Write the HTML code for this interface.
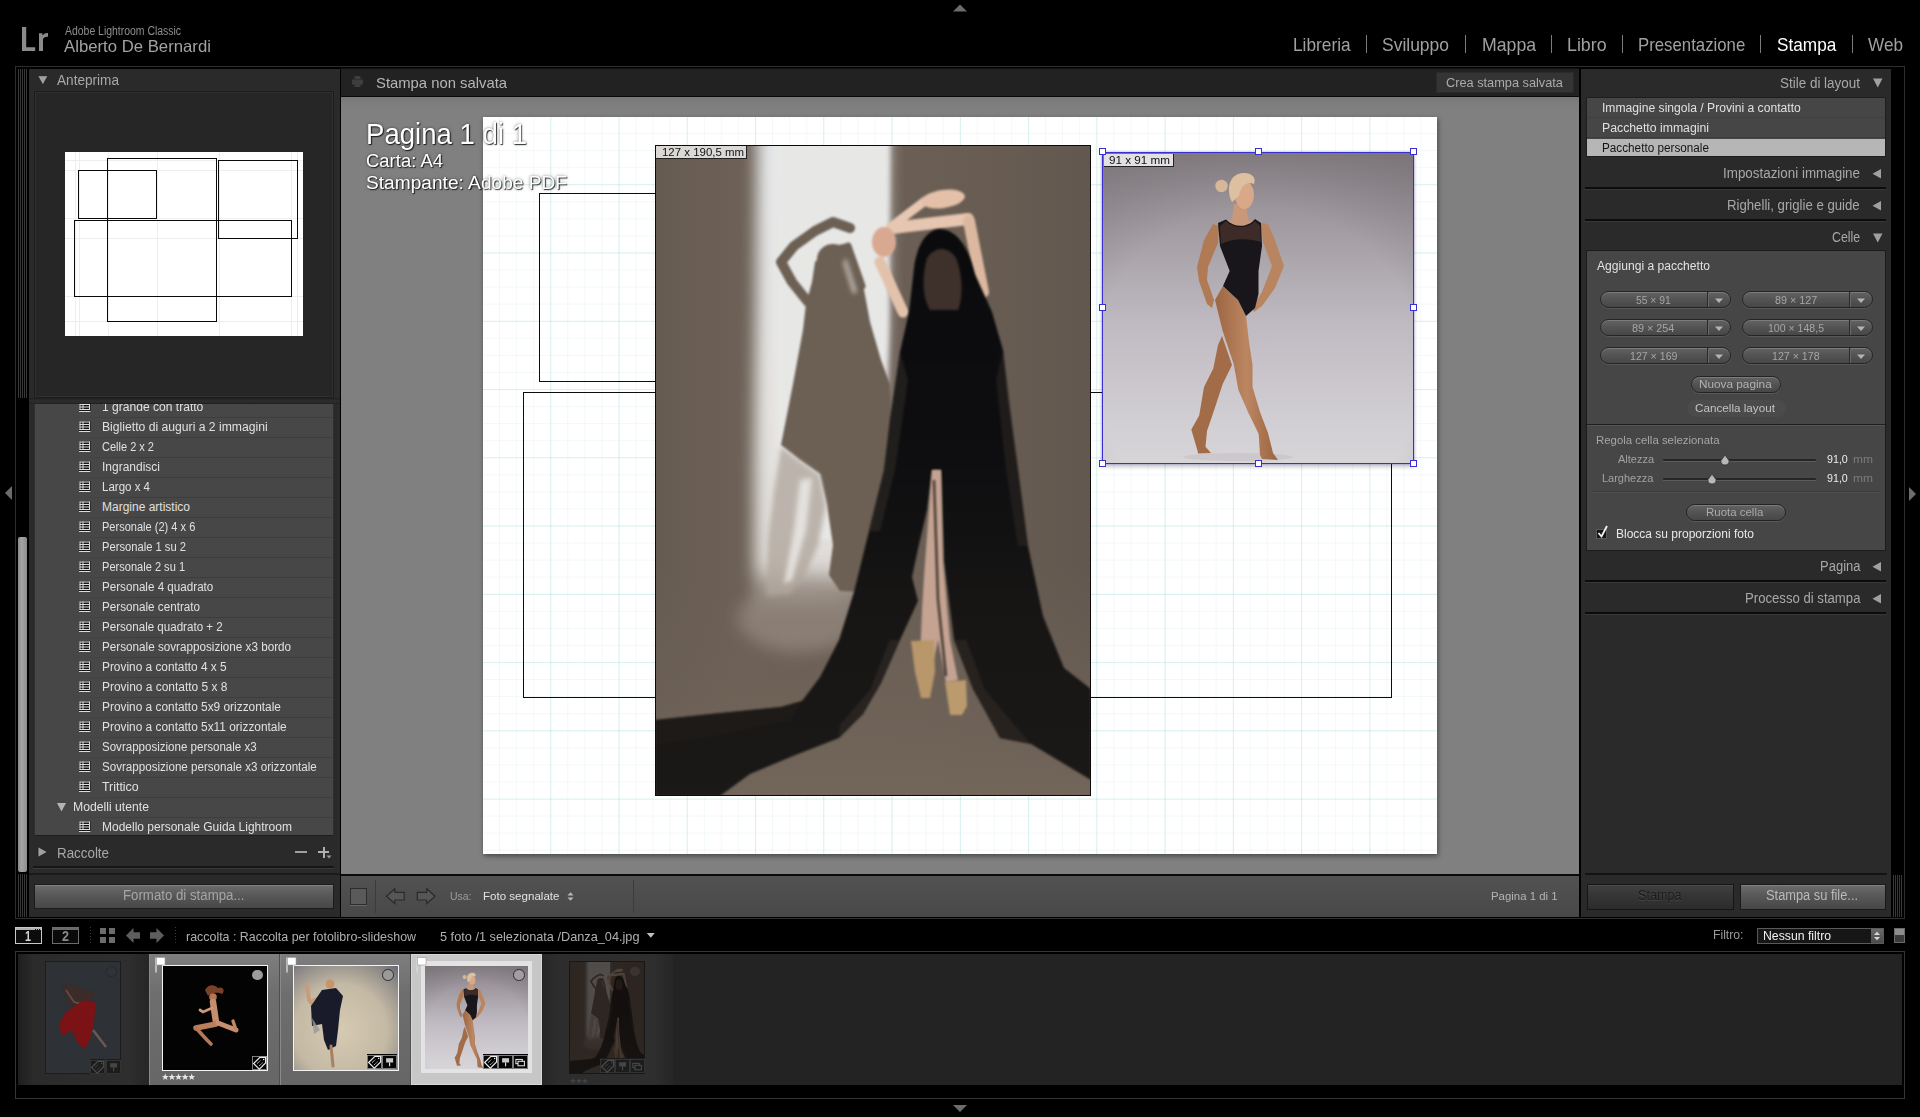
<!DOCTYPE html>
<html><head><meta charset="utf-8"><title>Lightroom Classic - Stampa</title>
<style>
*{box-sizing:border-box;margin:0;padding:0}
html,body{width:1920px;height:1117px;overflow:hidden;background:#000}
body{font-family:"Liberation Sans",sans-serif;position:relative}
.a{position:absolute;display:block}
.t{position:absolute;display:block;white-space:nowrap;line-height:1;transform-origin:0 50%}
</style></head>
<body>
<!-- TOP -->
<svg class="a" style="left:20px;top:25px" width="32" height="30" viewBox="20 25 32 30"><path d="M22 27h4.2v20.3h9v3.7H22z" fill="#8a8a8a"/><path d="M39 33.2h3.3l.3 2.3c1.2-1.8 2.9-2.6 5.4-2.5v3.8c-2.700-.3-4.6.6-5 2.600V51h-4z" fill="#8a8a8a"/></svg>
<span class="t" style="left:65.0px;top:25.1px;font-size:12px;color:#8e8e8e;transform:scaleX(0.870);">Adobe Lightroom Classic</span>
<span class="t" style="left:64.0px;top:37.6px;font-size:16.5px;color:#a2a2a2;transform:scaleX(1.014);">Alberto De Bernardi</span>
<span class="t" style="left:1293.0px;top:35.4px;font-size:19px;color:#a0a0a0;transform:scaleX(0.909);">Libreria</span>
<span class="t" style="left:1382.4px;top:35.4px;font-size:19px;color:#a0a0a0;transform:scaleX(0.919);">Sviluppo</span>
<span class="t" style="left:1481.6px;top:35.4px;font-size:19px;color:#a0a0a0;transform:scaleX(0.931);">Mappa</span>
<span class="t" style="left:1567.2px;top:35.4px;font-size:19px;color:#a0a0a0;transform:scaleX(0.937);">Libro</span>
<span class="t" style="left:1638.3px;top:35.4px;font-size:19px;color:#a0a0a0;transform:scaleX(0.883);">Presentazione</span>
<span class="t" style="left:1777.0px;top:35.4px;font-size:19px;color:#ffffff;transform:scaleX(0.906);">Stampa</span>
<span class="t" style="left:1868.0px;top:35.4px;font-size:19px;color:#a0a0a0;transform:scaleX(0.904);">Web</span>
<div class="a" style="left:1365.5px;top:35px;width:1px;height:18px;background:#7a7a7a"></div>
<div class="a" style="left:1464.5px;top:35px;width:1px;height:18px;background:#7a7a7a"></div>
<div class="a" style="left:1550.5px;top:35px;width:1px;height:18px;background:#7a7a7a"></div>
<div class="a" style="left:1621.5px;top:35px;width:1px;height:18px;background:#7a7a7a"></div>
<div class="a" style="left:1759.5px;top:35px;width:1px;height:18px;background:#7a7a7a"></div>
<div class="a" style="left:1851.5px;top:35px;width:1px;height:18px;background:#7a7a7a"></div>
<svg class="a" style="left:950px;top:2px" width="20" height="12"><path d="M3 9.500L10 2.500L17 9.500z" fill="#6c6c6c"/></svg>
<svg class="a" style="left:950px;top:1102px" width="20" height="12"><path d="M3 3L10 10L17 3z" fill="#6c6c6c"/></svg>
<svg class="a" style="left:2px;top:484px" width="12" height="18"><path d="M10 2L3 9L10 16z" fill="#6c6c6c"/></svg>
<svg class="a" style="left:1906px;top:485px" width="12" height="18"><path d="M3 2L10 9L3 16z" fill="#6c6c6c"/></svg>
<div class="a" style="left:15px;top:66px;width:1890px;height:853px;border:1px solid #2e2e2e;border-bottom-color:#2e2e2e"></div>
<div class="a" style="left:18px;top:69px;width:9px;height:329px;background:repeating-linear-gradient(90deg,#383838 0 1px,#000 1px 2px)"></div>
<div class="a" style="left:18px;top:874px;width:9px;height:43px;background:repeating-linear-gradient(90deg,#383838 0 1px,#000 1px 2px)"></div>
<div class="a" style="left:18px;top:537px;width:9px;height:335px;background:linear-gradient(90deg,#8a8a8a,#a4a4a4 40%,#8c8c8c);border-radius:2px"></div>
<div class="a" style="left:1893px;top:875px;width:9px;height:42px;background:repeating-linear-gradient(90deg,#383838 0 1px,#000 1px 2px)"></div>
<!-- LEFT -->
<div class="a" style="left:29px;top:69px;width:311px;height:848px;background:#2a2a2a"></div>
<svg class="a" style="left:36px;top:73px" width="14" height="14"><path d="M1.700 2.700h10.300L6.850 12z" fill="#a0a0a0" stroke="#151515" stroke-width=".7"/></svg>
<span class="t" style="left:57.0px;top:73.1px;font-size:14px;color:#a8a8a8;transform:scaleX(0.972);">Anteprima</span>
<div class="a" style="left:34px;top:91px;width:300px;height:307px;background:#262626;border:1px solid #1c1c1c;box-shadow:inset 0 0 0 1px #303030"></div>
<svg class="a" style="left:65px;top:152px" width="238" height="184" viewBox="65 152 238 184"><rect x="65" y="152" width="238" height="184" fill="#fff"/><path d="M75.500 152v184M79.500 152v184M108.500 152v184M157.500 152v184M219.500 152v184M291.500 152v184M297.500 152v184M65 160.500h238M65 170.500h238M65 218.500h238M65 238.500h238M65 296.500h238M65 321.500h238" stroke="#eeeeee" stroke-width="1"/><g fill="none" stroke="#0a0a0a" stroke-width="1"><rect x="107.500" y="158.500" width="109" height="163"/><rect x="78.500" y="170.500" width="78" height="48"/><rect x="218.500" y="160.500" width="79" height="78"/><rect x="74.500" y="220.500" width="217" height="76"/></g></svg>
<div class="a" style="left:34px;top:404px;width:300px;height:432px;background:#474747;border-left:1px solid #2e2e2e;border-right:1px solid #2e2e2e;border-bottom:1px solid #1e1e1e"></div>
<div class="a" style="left:60px;top:417px;width:273px;height:1px;background:linear-gradient(90deg,rgba(62,62,62,0),#3d3d3d 30%)"></div>
<div class="a" style="left:60px;top:437px;width:273px;height:1px;background:linear-gradient(90deg,rgba(62,62,62,0),#3d3d3d 30%)"></div>
<div class="a" style="left:60px;top:457px;width:273px;height:1px;background:linear-gradient(90deg,rgba(62,62,62,0),#3d3d3d 30%)"></div>
<div class="a" style="left:60px;top:477px;width:273px;height:1px;background:linear-gradient(90deg,rgba(62,62,62,0),#3d3d3d 30%)"></div>
<div class="a" style="left:60px;top:497px;width:273px;height:1px;background:linear-gradient(90deg,rgba(62,62,62,0),#3d3d3d 30%)"></div>
<div class="a" style="left:60px;top:517px;width:273px;height:1px;background:linear-gradient(90deg,rgba(62,62,62,0),#3d3d3d 30%)"></div>
<div class="a" style="left:60px;top:537px;width:273px;height:1px;background:linear-gradient(90deg,rgba(62,62,62,0),#3d3d3d 30%)"></div>
<div class="a" style="left:60px;top:557px;width:273px;height:1px;background:linear-gradient(90deg,rgba(62,62,62,0),#3d3d3d 30%)"></div>
<div class="a" style="left:60px;top:577px;width:273px;height:1px;background:linear-gradient(90deg,rgba(62,62,62,0),#3d3d3d 30%)"></div>
<div class="a" style="left:60px;top:597px;width:273px;height:1px;background:linear-gradient(90deg,rgba(62,62,62,0),#3d3d3d 30%)"></div>
<div class="a" style="left:60px;top:617px;width:273px;height:1px;background:linear-gradient(90deg,rgba(62,62,62,0),#3d3d3d 30%)"></div>
<div class="a" style="left:60px;top:637px;width:273px;height:1px;background:linear-gradient(90deg,rgba(62,62,62,0),#3d3d3d 30%)"></div>
<div class="a" style="left:60px;top:657px;width:273px;height:1px;background:linear-gradient(90deg,rgba(62,62,62,0),#3d3d3d 30%)"></div>
<div class="a" style="left:60px;top:677px;width:273px;height:1px;background:linear-gradient(90deg,rgba(62,62,62,0),#3d3d3d 30%)"></div>
<div class="a" style="left:60px;top:697px;width:273px;height:1px;background:linear-gradient(90deg,rgba(62,62,62,0),#3d3d3d 30%)"></div>
<div class="a" style="left:60px;top:717px;width:273px;height:1px;background:linear-gradient(90deg,rgba(62,62,62,0),#3d3d3d 30%)"></div>
<div class="a" style="left:60px;top:737px;width:273px;height:1px;background:linear-gradient(90deg,rgba(62,62,62,0),#3d3d3d 30%)"></div>
<div class="a" style="left:60px;top:757px;width:273px;height:1px;background:linear-gradient(90deg,rgba(62,62,62,0),#3d3d3d 30%)"></div>
<div class="a" style="left:60px;top:777px;width:273px;height:1px;background:linear-gradient(90deg,rgba(62,62,62,0),#3d3d3d 30%)"></div>
<div class="a" style="left:60px;top:797px;width:273px;height:1px;background:linear-gradient(90deg,rgba(62,62,62,0),#3d3d3d 30%)"></div>
<div class="a" style="left:60px;top:817px;width:273px;height:1px;background:linear-gradient(90deg,rgba(62,62,62,0),#3d3d3d 30%)"></div>
<svg class="a" style="left:78.5px;top:401.25px" width="12" height="12" viewBox="0 0 12 12"><rect x="0" y="0" width="11.500" height="11.500" fill="#141414"/><path d="M.5 1h10.500M.5 3.500h10.500M.5 6h10.500M.5 8.500h10.500M1 .5v8.500M10.500 .5v8.500M4 .5v8.500" stroke="#dcdcdc" stroke-width="1" fill="none"/><path d="M0 10.600h11.500" stroke="#e6e6e6" stroke-width="1.100"/></svg>
<span class="t" style="left:102.0px;top:401.0px;font-size:12px;color:#e0e0e0;transform:scaleX(1.006);">1 grande con tratto</span>
<svg class="a" style="left:78.5px;top:421.25px" width="12" height="12" viewBox="0 0 12 12"><rect x="0" y="0" width="11.500" height="11.500" fill="#141414"/><path d="M.5 1h10.500M.5 3.500h10.500M.5 6h10.500M.5 8.500h10.500M1 .5v8.500M10.500 .5v8.500M4 .5v8.500" stroke="#dcdcdc" stroke-width="1" fill="none"/><path d="M0 10.600h11.500" stroke="#e6e6e6" stroke-width="1.100"/></svg>
<span class="t" style="left:102.0px;top:421.0px;font-size:12px;color:#e0e0e0;transform:scaleX(1.014);">Biglietto di auguri a 2 immagini</span>
<svg class="a" style="left:78.5px;top:441.25px" width="12" height="12" viewBox="0 0 12 12"><rect x="0" y="0" width="11.500" height="11.500" fill="#141414"/><path d="M.5 1h10.500M.5 3.500h10.500M.5 6h10.500M.5 8.500h10.500M1 .5v8.500M10.500 .5v8.500M4 .5v8.500" stroke="#dcdcdc" stroke-width="1" fill="none"/><path d="M0 10.600h11.500" stroke="#e6e6e6" stroke-width="1.100"/></svg>
<span class="t" style="left:102.0px;top:441.0px;font-size:12px;color:#e0e0e0;transform:scaleX(0.917);">Celle 2 x 2</span>
<svg class="a" style="left:78.5px;top:461.25px" width="12" height="12" viewBox="0 0 12 12"><rect x="0" y="0" width="11.500" height="11.500" fill="#141414"/><path d="M.5 1h10.500M.5 3.500h10.500M.5 6h10.500M.5 8.500h10.500M1 .5v8.500M10.500 .5v8.500M4 .5v8.500" stroke="#dcdcdc" stroke-width="1" fill="none"/><path d="M0 10.600h11.500" stroke="#e6e6e6" stroke-width="1.100"/></svg>
<span class="t" style="left:102.0px;top:461.0px;font-size:12px;color:#e0e0e0;transform:scaleX(0.999);">Ingrandisci</span>
<svg class="a" style="left:78.5px;top:481.25px" width="12" height="12" viewBox="0 0 12 12"><rect x="0" y="0" width="11.500" height="11.500" fill="#141414"/><path d="M.5 1h10.500M.5 3.500h10.500M.5 6h10.500M.5 8.500h10.500M1 .5v8.500M10.500 .5v8.500M4 .5v8.500" stroke="#dcdcdc" stroke-width="1" fill="none"/><path d="M0 10.600h11.500" stroke="#e6e6e6" stroke-width="1.100"/></svg>
<span class="t" style="left:102.0px;top:481.0px;font-size:12px;color:#e0e0e0;transform:scaleX(0.959);">Largo x 4</span>
<svg class="a" style="left:78.5px;top:501.25px" width="12" height="12" viewBox="0 0 12 12"><rect x="0" y="0" width="11.500" height="11.500" fill="#141414"/><path d="M.5 1h10.500M.5 3.500h10.500M.5 6h10.500M.5 8.500h10.500M1 .5v8.500M10.500 .5v8.500M4 .5v8.500" stroke="#dcdcdc" stroke-width="1" fill="none"/><path d="M0 10.600h11.500" stroke="#e6e6e6" stroke-width="1.100"/></svg>
<span class="t" style="left:102.0px;top:501.0px;font-size:12px;color:#e0e0e0;transform:scaleX(1.000);">Margine artistico</span>
<svg class="a" style="left:78.5px;top:521.25px" width="12" height="12" viewBox="0 0 12 12"><rect x="0" y="0" width="11.500" height="11.500" fill="#141414"/><path d="M.5 1h10.500M.5 3.500h10.500M.5 6h10.500M.5 8.500h10.500M1 .5v8.500M10.500 .5v8.500M4 .5v8.500" stroke="#dcdcdc" stroke-width="1" fill="none"/><path d="M0 10.600h11.500" stroke="#e6e6e6" stroke-width="1.100"/></svg>
<span class="t" style="left:102.0px;top:521.0px;font-size:12px;color:#e0e0e0;transform:scaleX(0.920);">Personale (2) 4 x 6</span>
<svg class="a" style="left:78.5px;top:541.25px" width="12" height="12" viewBox="0 0 12 12"><rect x="0" y="0" width="11.500" height="11.500" fill="#141414"/><path d="M.5 1h10.500M.5 3.500h10.500M.5 6h10.500M.5 8.500h10.500M1 .5v8.500M10.500 .5v8.500M4 .5v8.500" stroke="#dcdcdc" stroke-width="1" fill="none"/><path d="M0 10.600h11.500" stroke="#e6e6e6" stroke-width="1.100"/></svg>
<span class="t" style="left:102.0px;top:541.0px;font-size:12px;color:#e0e0e0;transform:scaleX(0.933);">Personale 1 su 2</span>
<svg class="a" style="left:78.5px;top:561.25px" width="12" height="12" viewBox="0 0 12 12"><rect x="0" y="0" width="11.500" height="11.500" fill="#141414"/><path d="M.5 1h10.500M.5 3.500h10.500M.5 6h10.500M.5 8.500h10.500M1 .5v8.500M10.500 .5v8.500M4 .5v8.500" stroke="#dcdcdc" stroke-width="1" fill="none"/><path d="M0 10.600h11.500" stroke="#e6e6e6" stroke-width="1.100"/></svg>
<span class="t" style="left:102.0px;top:561.0px;font-size:12px;color:#e0e0e0;transform:scaleX(0.922);">Personale 2 su 1</span>
<svg class="a" style="left:78.5px;top:581.25px" width="12" height="12" viewBox="0 0 12 12"><rect x="0" y="0" width="11.500" height="11.500" fill="#141414"/><path d="M.5 1h10.500M.5 3.500h10.500M.5 6h10.500M.5 8.500h10.500M1 .5v8.500M10.500 .5v8.500M4 .5v8.500" stroke="#dcdcdc" stroke-width="1" fill="none"/><path d="M0 10.600h11.500" stroke="#e6e6e6" stroke-width="1.100"/></svg>
<span class="t" style="left:102.0px;top:581.0px;font-size:12px;color:#e0e0e0;transform:scaleX(0.970);">Personale 4 quadrato</span>
<svg class="a" style="left:78.5px;top:601.25px" width="12" height="12" viewBox="0 0 12 12"><rect x="0" y="0" width="11.500" height="11.500" fill="#141414"/><path d="M.5 1h10.500M.5 3.500h10.500M.5 6h10.500M.5 8.500h10.500M1 .5v8.500M10.500 .5v8.500M4 .5v8.500" stroke="#dcdcdc" stroke-width="1" fill="none"/><path d="M0 10.600h11.500" stroke="#e6e6e6" stroke-width="1.100"/></svg>
<span class="t" style="left:102.0px;top:601.0px;font-size:12px;color:#e0e0e0;transform:scaleX(0.973);">Personale centrato</span>
<svg class="a" style="left:78.5px;top:621.25px" width="12" height="12" viewBox="0 0 12 12"><rect x="0" y="0" width="11.500" height="11.500" fill="#141414"/><path d="M.5 1h10.500M.5 3.500h10.500M.5 6h10.500M.5 8.500h10.500M1 .5v8.500M10.500 .5v8.500M4 .5v8.500" stroke="#dcdcdc" stroke-width="1" fill="none"/><path d="M0 10.600h11.500" stroke="#e6e6e6" stroke-width="1.100"/></svg>
<span class="t" style="left:102.0px;top:621.0px;font-size:12px;color:#e0e0e0;transform:scaleX(0.965);">Personale quadrato + 2</span>
<svg class="a" style="left:78.5px;top:641.25px" width="12" height="12" viewBox="0 0 12 12"><rect x="0" y="0" width="11.500" height="11.500" fill="#141414"/><path d="M.5 1h10.500M.5 3.500h10.500M.5 6h10.500M.5 8.500h10.500M1 .5v8.500M10.500 .5v8.500M4 .5v8.500" stroke="#dcdcdc" stroke-width="1" fill="none"/><path d="M0 10.600h11.500" stroke="#e6e6e6" stroke-width="1.100"/></svg>
<span class="t" style="left:102.0px;top:641.0px;font-size:12px;color:#e0e0e0;transform:scaleX(0.974);">Personale sovrapposizione x3 bordo</span>
<svg class="a" style="left:78.5px;top:661.25px" width="12" height="12" viewBox="0 0 12 12"><rect x="0" y="0" width="11.500" height="11.500" fill="#141414"/><path d="M.5 1h10.500M.5 3.500h10.500M.5 6h10.500M.5 8.500h10.500M1 .5v8.500M10.500 .5v8.500M4 .5v8.500" stroke="#dcdcdc" stroke-width="1" fill="none"/><path d="M0 10.600h11.500" stroke="#e6e6e6" stroke-width="1.100"/></svg>
<span class="t" style="left:102.0px;top:661.0px;font-size:12px;color:#e0e0e0;transform:scaleX(0.989);">Provino a contatto 4 x 5</span>
<svg class="a" style="left:78.5px;top:681.25px" width="12" height="12" viewBox="0 0 12 12"><rect x="0" y="0" width="11.500" height="11.500" fill="#141414"/><path d="M.5 1h10.500M.5 3.500h10.500M.5 6h10.500M.5 8.500h10.500M1 .5v8.500M10.500 .5v8.500M4 .5v8.500" stroke="#dcdcdc" stroke-width="1" fill="none"/><path d="M0 10.600h11.500" stroke="#e6e6e6" stroke-width="1.100"/></svg>
<span class="t" style="left:102.0px;top:681.0px;font-size:12px;color:#e0e0e0;transform:scaleX(0.994);">Provino a contatto 5 x 8</span>
<svg class="a" style="left:78.5px;top:701.25px" width="12" height="12" viewBox="0 0 12 12"><rect x="0" y="0" width="11.500" height="11.500" fill="#141414"/><path d="M.5 1h10.500M.5 3.500h10.500M.5 6h10.500M.5 8.500h10.500M1 .5v8.500M10.500 .5v8.500M4 .5v8.500" stroke="#dcdcdc" stroke-width="1" fill="none"/><path d="M0 10.600h11.500" stroke="#e6e6e6" stroke-width="1.100"/></svg>
<span class="t" style="left:102.0px;top:701.0px;font-size:12px;color:#e0e0e0;transform:scaleX(0.990);">Provino a contatto 5x9 orizzontale</span>
<svg class="a" style="left:78.5px;top:721.25px" width="12" height="12" viewBox="0 0 12 12"><rect x="0" y="0" width="11.500" height="11.500" fill="#141414"/><path d="M.5 1h10.500M.5 3.500h10.500M.5 6h10.500M.5 8.500h10.500M1 .5v8.500M10.500 .5v8.500M4 .5v8.500" stroke="#dcdcdc" stroke-width="1" fill="none"/><path d="M0 10.600h11.500" stroke="#e6e6e6" stroke-width="1.100"/></svg>
<span class="t" style="left:102.0px;top:721.0px;font-size:12px;color:#e0e0e0;transform:scaleX(0.990);">Provino a contatto 5x11 orizzontale</span>
<svg class="a" style="left:78.5px;top:741.25px" width="12" height="12" viewBox="0 0 12 12"><rect x="0" y="0" width="11.500" height="11.500" fill="#141414"/><path d="M.5 1h10.500M.5 3.500h10.500M.5 6h10.500M.5 8.500h10.500M1 .5v8.500M10.500 .5v8.500M4 .5v8.500" stroke="#dcdcdc" stroke-width="1" fill="none"/><path d="M0 10.600h11.500" stroke="#e6e6e6" stroke-width="1.100"/></svg>
<span class="t" style="left:102.0px;top:741.0px;font-size:12px;color:#e0e0e0;transform:scaleX(0.962);">Sovrapposizione personale x3</span>
<svg class="a" style="left:78.5px;top:761.25px" width="12" height="12" viewBox="0 0 12 12"><rect x="0" y="0" width="11.500" height="11.500" fill="#141414"/><path d="M.5 1h10.500M.5 3.500h10.500M.5 6h10.500M.5 8.500h10.500M1 .5v8.500M10.500 .5v8.500M4 .5v8.500" stroke="#dcdcdc" stroke-width="1" fill="none"/><path d="M0 10.600h11.500" stroke="#e6e6e6" stroke-width="1.100"/></svg>
<span class="t" style="left:102.0px;top:761.0px;font-size:12px;color:#e0e0e0;transform:scaleX(0.967);">Sovrapposizione personale x3 orizzontale</span>
<svg class="a" style="left:78.5px;top:781.25px" width="12" height="12" viewBox="0 0 12 12"><rect x="0" y="0" width="11.500" height="11.500" fill="#141414"/><path d="M.5 1h10.500M.5 3.500h10.500M.5 6h10.500M.5 8.500h10.500M1 .5v8.500M10.500 .5v8.500M4 .5v8.500" stroke="#dcdcdc" stroke-width="1" fill="none"/><path d="M0 10.600h11.500" stroke="#e6e6e6" stroke-width="1.100"/></svg>
<span class="t" style="left:102.0px;top:781.0px;font-size:12px;color:#e0e0e0;transform:scaleX(1.032);">Trittico</span>
<svg class="a" style="left:78.5px;top:821.25px" width="12" height="12" viewBox="0 0 12 12"><rect x="0" y="0" width="11.500" height="11.500" fill="#141414"/><path d="M.5 1h10.500M.5 3.500h10.500M.5 6h10.500M.5 8.500h10.500M1 .5v8.500M10.500 .5v8.500M4 .5v8.500" stroke="#dcdcdc" stroke-width="1" fill="none"/><path d="M0 10.600h11.500" stroke="#e6e6e6" stroke-width="1.100"/></svg>
<span class="t" style="left:102.0px;top:821.0px;font-size:12px;color:#e0e0e0;transform:scaleX(0.999);">Modello personale Guida Lightroom</span>
<svg class="a" style="left:55px;top:801px" width="13" height="12"><path d="M2 2h9L6.500 10.500z" fill="#b4b4b4"/></svg>
<span class="t" style="left:73.0px;top:801.0px;font-size:12px;color:#e0e0e0;transform:scaleX(1.017);">Modelli utente</span>
<div class="a" style="left:29px;top:398px;width:311px;height:6px;background:linear-gradient(#1e1e1e,#2c2c2c 40%,#2a2a2a 80%,#1a1a1a)"></div>
<svg class="a" style="left:36px;top:845px" width="14" height="14"><path d="M2 1.800v10.400L11.500 7z" fill="#a0a0a0" stroke="#151515" stroke-width=".7"/></svg>
<span class="t" style="left:57.0px;top:845.5px;font-size:14px;color:#a8a8a8;transform:scaleX(0.955);">Raccolte</span>
<div class="a" style="left:295px;top:851px;width:12px;height:2px;background:#a0a0a0"></div>
<div class="a" style="left:318px;top:851px;width:11px;height:2px;background:#b0b0b0"></div>
<div class="a" style="left:322.5px;top:846.5px;width:2px;height:11px;background:#b0b0b0"></div>
<svg class="a" style="left:326px;top:855px" width="7" height="5"><path d="M.5 .5h5L3 3.500z" fill="#9a9a9a"/></svg>
<div class="a" style="left:33px;top:866px;width:301px;height:2px;background:#161616"></div>
<div class="a" style="left:33px;top:868px;width:301px;height:1px;background:#3a3a3a"></div>
<div class="a" style="left:29px;top:873px;width:311px;height:2px;background:#1a1a1a"></div>
<div class="a" style="left:34px;top:884px;width:300px;height:25px;background:linear-gradient(#6c6c6c,#585858 45%,#474747);border:1px solid #1c1c1c;box-shadow:inset 0 1px 0 #808080"></div>
<span class="t" style="left:123.0px;top:887.9px;font-size:14px;color:#a6a6a6;transform:scaleX(0.946);">Formato di stampa...</span>
<!-- CENTER -->
<div class="a" style="left:341px;top:68px;width:1238px;height:29px;background:#222;border-bottom:1px solid #080808;border-top:1px solid #101010"></div>
<svg class="a" style="left:350.500px;top:75px" width="13" height="13"><path d="M3.500 1h6v3h-6zM1 4.500h11v5H1zM3.500 8h6v4h-6z" fill="#3e3e3e"/></svg>
<span class="t" style="left:375.5px;top:75.1px;font-size:15px;color:#b6b6b6;transform:scaleX(0.988);">Stampa non salvata</span>
<div class="a" style="left:1436px;top:72px;width:138px;height:21px;background:#343434;border:1px solid #2a2a2a"></div>
<span class="t" style="left:1446.0px;top:76.4px;font-size:13px;color:#ababab;transform:scaleX(0.981);">Crea stampa salvata</span>
<div class="a" style="left:341px;top:97px;width:1238px;height:777px;background:linear-gradient(#787878,#808080 10px,#808080)"></div>
<div class="a" style="left:483px;top:117px;width:954px;height:737px;background-color:#fff;background-image:linear-gradient(90deg,rgba(130,215,208,.26) 1px,transparent 1px),linear-gradient(rgba(130,215,208,.26) 1px,transparent 1px),linear-gradient(90deg,rgba(160,205,212,.13) 1px,transparent 1px),linear-gradient(rgba(160,205,212,.13) 1px,transparent 1px);background-size:68.27px 68.27px,68.27px 68.27px,17.0675px 17.0675px,17.0675px 17.0675px;background-position:-1px -1px;box-shadow:1px 2px 5px rgba(0,0,0,.45)"></div>
<div class="a" style="left:539px;top:193px;width:320px;height:189px;border:1px solid #0c0c0c"></div>
<div class="a" style="left:523px;top:392px;width:869px;height:306px;border:1px solid #0c0c0c"></div>
<svg class="a" style="left:655px;top:145px" width="436" height="651" viewBox="655 145 436 651"><defs><linearGradient id="abg" x1="0" y1="0" x2="1" y2="0"><stop offset="0" stop-color="#665b51"/><stop offset=".18" stop-color="#6d6157"/><stop offset=".6" stop-color="#6b5f55"/><stop offset="1" stop-color="#63584f"/></linearGradient><linearGradient id="afl" x1="0" y1="0" x2="0" y2="1"><stop offset="0" stop-color="#6c6056" stop-opacity="0"/><stop offset="1" stop-color="#72665b"/></linearGradient><linearGradient id="alb" x1="0" y1="0" x2="0" y2="1"><stop offset="0" stop-color="#e6e8ea"/><stop offset=".6" stop-color="#e6e4e1"/><stop offset=".9" stop-color="#e0dcd8"/><stop offset="1" stop-color="#d0c8c0" stop-opacity="0"/></linearGradient><linearGradient id="avl" x1="0" y1="0" x2="0" y2="1"><stop offset="0" stop-color="#0b0b0d"/><stop offset=".4" stop-color="#0e0e10"/><stop offset=".7" stop-color="#181615"/><stop offset="1" stop-color="#1b1917"/></linearGradient><filter id="ab8" color-interpolation-filters="sRGB" x="-20%" y="-20%" width="140%" height="140%"><feGaussianBlur stdDeviation="8"/></filter><filter id="ab3" color-interpolation-filters="sRGB" x="-20%" y="-20%" width="140%" height="140%"><feGaussianBlur stdDeviation="2.500"/></filter><filter id="ab1" color-interpolation-filters="sRGB" x="-20%" y="-20%" width="140%" height="140%"><feGaussianBlur stdDeviation="0.800"/></filter><clipPath id="acl"><rect x="655" y="145" width="436" height="651"/></clipPath></defs><g clip-path="url(#acl)"><rect x="655" y="145" width="436" height="651" fill="url(#abg)"/><rect x="655" y="560" width="436" height="236" fill="url(#afl)"/><g filter="url(#ab8)"><path d="M757 120H888L886 330L882 420L878 480L870 560L860 612L754 612L754 470L756 300z" fill="url(#alb)"/></g><g filter="url(#ab3)"><path d="M776 120H890L889 330L886 420L882 480L876 540L776 540z" fill="#e7e7e6"/></g><ellipse cx="800" cy="618" rx="62" ry="34" fill="#a4988e" opacity=".55" filter="url(#ab8)"/><g filter="url(#ab1)" fill="#6c5f53"><path d="M829 247L848 243L857 262L864 290L870 322L881 360L890 384L894 445L893 500L882 552L862 592L840 591L829 575L833 545L827 505L820 474L800 460L781 445L793 384L803 330L806 304L812 282L815 262z"/><path d="M808 302L792 282L781 262L794 246L815 231L833 222L850 228" fill="none" stroke="#6c5f53" stroke-width="10" stroke-linecap="round" stroke-linejoin="round"/><path d="M848 246L862 286" fill="none" stroke="#6c5f53" stroke-width="7" stroke-linecap="round"/><ellipse cx="833" cy="259" rx="16" ry="15"/></g><g filter="url(#ab3)"><path d="M781 447L800 461L820 475L826 505L818 545L804 578L790 594L766 596L768 540L774 490z" fill="#b1a79d" opacity=".8"/><path d="M800 480L812 478L806 530L792 580L784 584L794 530z" fill="#ebe9e6" opacity=".85"/><path d="M846 258L857 292L853 294L843 262z" fill="#d6d2cc" opacity=".8"/></g><g filter="url(#ab1)" stroke-linecap="round" fill="none"><path d="M903 312L880 262" stroke="#e3c2ac" stroke-width="11"/><path d="M892 228L968 219" stroke="#e6c6b0" stroke-width="12"/><path d="M969 221L983 292" stroke="#dcb8a0" stroke-width="12"/><path d="M892 226L925 201" stroke="#e6c7b2" stroke-width="9"/><ellipse cx="943" cy="199" rx="22" ry="9" fill="#e4c0a8" stroke="none" transform="rotate(-8 943 199)"/><ellipse cx="884" cy="242" rx="12" ry="15" fill="#d9a890" stroke="none"/></g><g filter="url(#ab1)"><path d="M939 229C925 231 917 246 914 268L909 312L900 352L890 420L884 470L869 531L854 592L839 640L820 677L802 701L781 707L711 714L655 720V796H720L750 774L793 756L839 738L863 714L881 683L900 640L918 601L912 577L918 549L927 510L932 470L941 470L944 561L954 640L973 689L1000 738L1031 744L1061 762L1091 780V689L1064 668L1043 616L1028 546L1018 470L1008 400L1003 350L992 312L975 274C968 244 955 229 939 229z" fill="url(#avl)"/><path d="M927 258C922 276 922 298 930 310H958C964 296 962 272 956 258C948 246 935 246 927 258z" fill="#3e302b"/><path d="M900 352L884 470L869 531L880 531L895 470L908 380z" fill="#2a2622" opacity=".7"/><path d="M1003 350L1018 470L1028 546L1018 546L1006 470L996 380z" fill="#26221f" opacity=".7"/><path d="M655 720L711 714L781 707L802 701L790 720L720 735L655 745z" fill="#1e1b19" opacity=".8"/><path d="M839 738L863 714L881 683L900 640L890 640L870 690L840 725z" fill="#2c2723" opacity=".8"/><path d="M954 640L973 689L1000 738L1031 744L1010 720L985 690L966 640z" fill="#2a2521" opacity=".8"/></g><g filter="url(#ab1)"><path d="M932 470L941 470L943 561L950 640L958 680L946 682L938 640L934 660L920 660L922 610L924 577L926 549L929 510z" fill="#c4a392"/><path d="M934 480L938 600L946 676" stroke="#2a201c" stroke-width="2.500" fill="none" opacity=".8"/><path d="M911 641L934 640L935 672L930 698L921 698L915 672z" fill="#b8976a"/><path d="M945 682L966 680L967 706L962 715L950 715z" fill="#bb9a6e"/></g></g><rect x="655.500" y="145.500" width="435" height="650" fill="none" stroke="#0a0a0a" stroke-width="1"/></svg>
<div class="a" style="left:656px;top:146px;width:91px;height:13px;background:#dcd8d6;border-right:1px solid #222;border-bottom:1px solid #222"></div>
<span class="t" style="left:661.5px;top:147.2px;font-size:11px;color:#111;transform:scaleX(1.040);">127 x 190,5 mm</span>
<svg class="a" style="left:1102px;top:152px" width="312" height="312" viewBox="1102 152 312 312"><defs><linearGradient id="cbg" x1="0" y1="0" x2="0" y2="1"><stop offset="0" stop-color="#8a8388"/><stop offset=".25" stop-color="#a39da3"/><stop offset=".55" stop-color="#bfbac1"/><stop offset=".85" stop-color="#d1ced3"/><stop offset="1" stop-color="#d8d5d9"/></linearGradient><radialGradient id="cvg" cx=".5" cy=".7" r=".95"><stop offset=".55" stop-color="#000" stop-opacity="0"/><stop offset="1" stop-color="#3a3036" stop-opacity=".22"/></radialGradient><filter id="cb1" color-interpolation-filters="sRGB"><feGaussianBlur stdDeviation="0.700"/></filter></defs><rect x="1102" y="152" width="312" height="312" fill="url(#cbg)"/><rect x="1102" y="152" width="312" height="312" fill="url(#cvg)"/><ellipse cx="1238" cy="457" rx="55" ry="4" fill="#b8b2b8" opacity=".35" filter="url(#cb1)"/><g filter="url(#cb1)"><g transform="translate(0 0) scale(1)"><defs><linearGradient id="skn" x1="0" y1="0" x2="1" y2="0"><stop offset="0" stop-color="#9c6644"/><stop offset=".5" stop-color="#bb8660"/><stop offset="1" stop-color="#9a6442"/></linearGradient></defs><path d="M1222 336L1232 365L1222.700 384L1215 407.600L1207 431L1205.500 446.700L1211 453L1198 453.500L1197.600 451L1191.300 429.500L1199.200 415.400L1204 387L1213.300 368.400L1218 345z" fill="#a26c49"/><path d="M1223 286L1238 300L1246 316L1249 342L1252.500 365L1252.500 387L1260 412L1268 433L1273 453L1278 460L1262 459L1260 455L1258.700 434L1248 412L1238.400 390L1233.700 364L1222.700 331L1215 300z" fill="url(#skn)"/><path d="M1213 224L1219 226L1218 243L1208 267L1207 280L1214 300L1212 308L1207 304L1199 281L1197 267L1204 240z" fill="#b07a54"/><path d="M1261 223L1268 224L1275 240L1284 266L1275 288L1262 306L1254 312L1252 308L1262 292L1272 266L1263 242z" fill="#b98460"/><path d="M1234 204L1246 204L1248 220L1256 222L1240 232L1224 222L1232 220z" fill="#c99878"/><path d="M1218 223L1226 219.500C1234 228 1248 228 1255 219L1261 223L1262 246L1258.500 271L1258.500 294L1255 308L1246 316L1238 300L1223 286L1229.700 271L1220 246z" fill="#18161a"/><path d="M1220 226L1226 221C1234 229 1248 229 1255 221L1260 226L1261 242C1248 238 1232 238 1221 244z" fill="#4a332c" opacity=".75"/><ellipse cx="1244.500" cy="195" rx="9.500" ry="14" fill="#d8a888"/><path d="M1232 202C1226 190 1229 176 1240 173.500C1250 171.500 1257 177 1254 184C1248 181 1241 184 1239 196z" fill="#dcc0a0"/><circle cx="1221.500" cy="186" r="6.200" fill="#d6b898"/></g></g></svg>
<div class="a" style="left:1104px;top:153.5px;width:70px;height:13px;background:#e2e0e2;border-right:1px solid #222;border-bottom:1px solid #222"></div>
<span class="t" style="left:1108.5px;top:154.7px;font-size:11px;color:#111;transform:scaleX(1.061);">91 x 91 mm</span>
<div class="a" style="left:1102px;top:152px;width:312px;height:312px;border:1px solid #3a2fd0;box-shadow:0 0 2px rgba(70,60,220,.5),0 3px 4px rgba(0,0,0,.22)"></div>
<div class="a" style="left:1099px;top:148.2px;width:7px;height:7px;background:#fff;border:1px solid #3a2fd0"></div>
<div class="a" style="left:1099px;top:303.7px;width:7px;height:7px;background:#fff;border:1px solid #3a2fd0"></div>
<div class="a" style="left:1099px;top:459.5px;width:7px;height:7px;background:#fff;border:1px solid #3a2fd0"></div>
<div class="a" style="left:1254.5px;top:148.2px;width:7px;height:7px;background:#fff;border:1px solid #3a2fd0"></div>
<div class="a" style="left:1254.5px;top:459.5px;width:7px;height:7px;background:#fff;border:1px solid #3a2fd0"></div>
<div class="a" style="left:1410px;top:148.2px;width:7px;height:7px;background:#fff;border:1px solid #3a2fd0"></div>
<div class="a" style="left:1410px;top:303.7px;width:7px;height:7px;background:#fff;border:1px solid #3a2fd0"></div>
<div class="a" style="left:1410px;top:459.5px;width:7px;height:7px;background:#fff;border:1px solid #3a2fd0"></div>
<span class="t" style="left:366.0px;top:118.5px;font-size:29.5px;color:#fff;transform:scaleX(0.935);text-shadow:1px 1px 1px rgba(0,0,0,.75),0 0 3px rgba(0,0,0,.55);">Pagina 1 di 1</span>
<span class="t" style="left:366.0px;top:152.3px;font-size:18px;color:#fff;transform:scaleX(1.026);text-shadow:1px 1px 1px rgba(0,0,0,.75),0 0 3px rgba(0,0,0,.55);">Carta: A4</span>
<span class="t" style="left:366.0px;top:174.4px;font-size:18px;color:#fff;transform:scaleX(1.063);text-shadow:1px 1px 1px rgba(0,0,0,.75),0 0 3px rgba(0,0,0,.55);">Stampante: Adobe PDF</span>
<div class="a" style="left:341px;top:874px;width:1238px;height:2px;background:#0a0a0a"></div>
<div class="a" style="left:341px;top:876px;width:1238px;height:41px;background:linear-gradient(#525252,#484848)"></div>
<div class="a" style="left:350px;top:888px;width:17px;height:17px;background:#5a5a5a;border:1px solid #2c2c2c;box-shadow:0 1px 0 #666"></div>
<div class="a" style="left:375px;top:880px;width:1px;height:33px;background:#3c3c3c"></div>
<div class="a" style="left:633px;top:880px;width:1px;height:33px;background:#3c3c3c"></div>
<svg class="a" style="left:384px;top:886px" width="54" height="21" viewBox="384 886 54 21"><g fill="#565656" stroke="#2a2a2a" stroke-width="1.200" stroke-linejoin="miter"><path d="M386.500 896.200l8.300-7.500v3.700h9.400v7.600h-9.400v3.700z"/><path d="M435 896.200l-8.300-7.500v3.700h-9.400v7.600h9.400v3.700z"/></g></svg>
<span class="t" style="left:449.5px;top:891.0px;font-size:11.5px;color:#9c9c9c;transform:scaleX(0.909);">Usa:</span>
<span class="t" style="left:483.2px;top:891.0px;font-size:11.5px;color:#e2e2e2;transform:scaleX(1.005);">Foto segnalate</span>
<svg class="a" style="left:566px;top:890px" width="9" height="13"><path d="M1.500 5.400L4.500 2.200L7.500 5.400zM1.500 7.600L4.500 10.800L7.500 7.600z" fill="#b8b8b8"/></svg>
<span class="t" style="left:1491.0px;top:891.0px;font-size:11.5px;color:#b4b4b4;transform:scaleX(0.991);">Pagina 1 di 1</span>
<!-- RIGHT -->
<div class="a" style="left:1581px;top:69px;width:310px;height:848px;background:#2a2a2a"></div>
<span class="t" style="left:1780.0px;top:76.3px;font-size:14px;color:#a8a8a8;transform:scaleX(0.961);">Stile di layout</span>
<svg class="a" style="left:1872px;top:77px" width="12" height="12"><path d="M1 1.500h9.500L5.750 10.500z" fill="#a0a0a0"/></svg>
<div class="a" style="left:1586px;top:97px;width:300px;height:60px;background:#464646;border:1px solid #1e1e1e"></div>
<div class="a" style="left:1587px;top:117px;width:298px;height:1px;background:#404040"></div>
<div class="a" style="left:1587px;top:137px;width:298px;height:1px;background:#3c3c3c"></div>
<div class="a" style="left:1587px;top:139px;width:298px;height:17px;background:#b6b6b6"></div>
<span class="t" style="left:1602.0px;top:102.0px;font-size:12px;color:#e0e0e0;transform:scaleX(1.010);">Immagine singola / Provini a contatto</span>
<span class="t" style="left:1602.0px;top:122.0px;font-size:12px;color:#e0e0e0;transform:scaleX(1.022);">Pacchetto immagini</span>
<span class="t" style="left:1602.0px;top:142.0px;font-size:12px;color:#141414;transform:scaleX(0.978);">Pacchetto personale</span>
<span class="t" style="left:1723.0px;top:166.3px;font-size:14px;color:#a8a8a8;transform:scaleX(0.957);">Impostazioni immagine</span>
<svg class="a" style="left:1871px;top:168px" width="12" height="12"><path d="M10 1v9.500L1.500 5.750z" fill="#a0a0a0"/></svg>
<div class="a" style="left:1585px;top:187px;width:301px;height:2px;background:#0c0c0c"></div><div class="a" style="left:1585px;top:189px;width:301px;height:1px;background:#383838"></div>
<span class="t" style="left:1727.3px;top:198.3px;font-size:14px;color:#a8a8a8;transform:scaleX(0.942);">Righelli, griglie e guide</span>
<svg class="a" style="left:1871px;top:200px" width="12" height="12"><path d="M10 1v9.500L1.500 5.750z" fill="#a0a0a0"/></svg>
<div class="a" style="left:1585px;top:219px;width:301px;height:2px;background:#0c0c0c"></div><div class="a" style="left:1585px;top:221px;width:301px;height:1px;background:#383838"></div>
<span class="t" style="left:1831.8px;top:230.3px;font-size:14px;color:#a8a8a8;transform:scaleX(0.884);">Celle</span>
<svg class="a" style="left:1872px;top:232px" width="12" height="12"><path d="M1 1.500h9.500L5.750 10.500z" fill="#a0a0a0"/></svg>
<div class="a" style="left:1586px;top:250px;width:300px;height:301px;background:#464646;border:1px solid #1c1c1c"></div>
<span class="t" style="left:1597.0px;top:259.9px;font-size:12.5px;color:#e2e2e2;transform:scaleX(0.968);">Aggiungi a pacchetto</span>
<div class="a" style="left:1599.5px;top:291px;width:131px;height:17px;border-radius:8.5px;background:linear-gradient(#636363,#535353 50%,#474747);border:1px solid #242424;box-shadow:0 1px 0 rgba(255,255,255,.10),inset 0 1px 0 rgba(255,255,255,.16)"></div><div class="a" style="left:1707px;top:292px;width:1px;height:15px;background:#2a2a2a"></div><div class="a" style="left:1708px;top:292px;width:1px;height:15px;background:#686868"></div><svg class="a" style="left:1713.5px;top:296.5px" width="10" height="7"><path d="M1 1.500h8L5 6z" fill="#b4b4b4"/></svg><span class="t" style="left:1636.1px;top:294.6px;font-size:11.5px;color:#a6a6a6;transform:scaleX(0.899);">55 × 91</span>
<div class="a" style="left:1741.5px;top:291px;width:131px;height:17px;border-radius:8.5px;background:linear-gradient(#636363,#535353 50%,#474747);border:1px solid #242424;box-shadow:0 1px 0 rgba(255,255,255,.10),inset 0 1px 0 rgba(255,255,255,.16)"></div><div class="a" style="left:1849px;top:292px;width:1px;height:15px;background:#2a2a2a"></div><div class="a" style="left:1850px;top:292px;width:1px;height:15px;background:#686868"></div><svg class="a" style="left:1855.5px;top:296.5px" width="10" height="7"><path d="M1 1.500h8L5 6z" fill="#b4b4b4"/></svg><span class="t" style="left:1774.8px;top:294.6px;font-size:11.5px;color:#a6a6a6;transform:scaleX(0.938);">89 × 127</span>
<div class="a" style="left:1599.5px;top:319px;width:131px;height:17px;border-radius:8.5px;background:linear-gradient(#636363,#535353 50%,#474747);border:1px solid #242424;box-shadow:0 1px 0 rgba(255,255,255,.10),inset 0 1px 0 rgba(255,255,255,.16)"></div><div class="a" style="left:1707px;top:320px;width:1px;height:15px;background:#2a2a2a"></div><div class="a" style="left:1708px;top:320px;width:1px;height:15px;background:#686868"></div><svg class="a" style="left:1713.5px;top:324.5px" width="10" height="7"><path d="M1 1.500h8L5 6z" fill="#b4b4b4"/></svg><span class="t" style="left:1632.3px;top:322.6px;font-size:11.5px;color:#a6a6a6;transform:scaleX(0.938);">89 × 254</span>
<div class="a" style="left:1741.5px;top:319px;width:131px;height:17px;border-radius:8.5px;background:linear-gradient(#636363,#535353 50%,#474747);border:1px solid #242424;box-shadow:0 1px 0 rgba(255,255,255,.10),inset 0 1px 0 rgba(255,255,255,.16)"></div><div class="a" style="left:1849px;top:320px;width:1px;height:15px;background:#2a2a2a"></div><div class="a" style="left:1850px;top:320px;width:1px;height:15px;background:#686868"></div><svg class="a" style="left:1855.5px;top:324.5px" width="10" height="7"><path d="M1 1.500h8L5 6z" fill="#b4b4b4"/></svg><span class="t" style="left:1768.0px;top:322.6px;font-size:11.5px;color:#a6a6a6;transform:scaleX(0.917);">100 × 148,5</span>
<div class="a" style="left:1599.5px;top:347px;width:131px;height:17px;border-radius:8.5px;background:linear-gradient(#636363,#535353 50%,#474747);border:1px solid #242424;box-shadow:0 1px 0 rgba(255,255,255,.10),inset 0 1px 0 rgba(255,255,255,.16)"></div><div class="a" style="left:1707px;top:348px;width:1px;height:15px;background:#2a2a2a"></div><div class="a" style="left:1708px;top:348px;width:1px;height:15px;background:#686868"></div><svg class="a" style="left:1713.5px;top:352.5px" width="10" height="7"><path d="M1 1.500h8L5 6z" fill="#b4b4b4"/></svg><span class="t" style="left:1629.8px;top:350.6px;font-size:11.5px;color:#a6a6a6;transform:scaleX(0.921);">127 × 169</span>
<div class="a" style="left:1741.5px;top:347px;width:131px;height:17px;border-radius:8.5px;background:linear-gradient(#636363,#535353 50%,#474747);border:1px solid #242424;box-shadow:0 1px 0 rgba(255,255,255,.10),inset 0 1px 0 rgba(255,255,255,.16)"></div><div class="a" style="left:1849px;top:348px;width:1px;height:15px;background:#2a2a2a"></div><div class="a" style="left:1850px;top:348px;width:1px;height:15px;background:#686868"></div><svg class="a" style="left:1855.5px;top:352.5px" width="10" height="7"><path d="M1 1.500h8L5 6z" fill="#b4b4b4"/></svg><span class="t" style="left:1772.2px;top:350.6px;font-size:11.5px;color:#a6a6a6;transform:scaleX(0.925);">127 × 178</span>
<div class="a" style="left:1691px;top:375.5px;width:90px;height:17px;border-radius:8.5px;background:linear-gradient(#636363,#535353 50%,#474747);border:1px solid #242424;box-shadow:0 1px 0 rgba(255,255,255,.10),inset 0 1px 0 rgba(255,255,255,.16)"></div>
<span class="t" style="left:1699.4px;top:378.5px;font-size:11.5px;color:#b2b2b2;transform:scaleX(1.024);">Nuova pagina</span>
<div class="a" style="left:1686.5px;top:400px;width:99.5px;height:17px;border-radius:8.500px;background:#4b4b4b"></div>
<span class="t" style="left:1695.4px;top:402.7px;font-size:11.5px;color:#c2c2c2;transform:scaleX(1.017);">Cancella layout</span>
<div class="a" style="left:1587px;top:424px;width:298px;height:1px;background:#1e1e1e"></div>
<div class="a" style="left:1587px;top:425px;width:298px;height:1px;background:#545454"></div>
<span class="t" style="left:1596.3px;top:434.7px;font-size:11.5px;color:#a6a6a6;transform:scaleX(0.991);">Regola cella selezionata</span>
<span class="t" style="left:1617.6px;top:453.8px;font-size:11.5px;color:#a2a2a2;transform:scaleX(0.955);">Altezza</span>
<div class="a" style="left:1663px;top:459px;width:153px;height:2px;background:#262626;border-radius:1px"></div><div class="a" style="left:1663px;top:461px;width:153px;height:1px;background:#5c5c5c"></div><svg class="a" style="left:1719.3px;top:453.5px" width="12" height="13"><path d="M6 1L10 6.500C10.500 9 9 11 6 11C3 11 1.500 9 2 6.500z" fill="#b8b8b8" stroke="#2e2e2e" stroke-width=".8"/></svg>
<span class="t" style="left:1827.0px;top:454.3px;font-size:11.5px;color:#ececec;transform:scaleX(0.929);">91,0</span>
<span class="t" style="left:1853.0px;top:454.3px;font-size:11.5px;color:#7c7c7c;transform:scaleX(1.044);">mm</span>
<span class="t" style="left:1602.3px;top:472.8px;font-size:11.5px;color:#a2a2a2;transform:scaleX(0.955);">Larghezza</span>
<div class="a" style="left:1663px;top:478px;width:153px;height:2px;background:#262626;border-radius:1px"></div><div class="a" style="left:1663px;top:480px;width:153px;height:1px;background:#5c5c5c"></div><svg class="a" style="left:1706.3px;top:472.5px" width="12" height="13"><path d="M6 1L10 6.500C10.500 9 9 11 6 11C3 11 1.500 9 2 6.500z" fill="#b8b8b8" stroke="#2e2e2e" stroke-width=".8"/></svg>
<span class="t" style="left:1827.0px;top:473.3px;font-size:11.5px;color:#ececec;transform:scaleX(0.929);">91,0</span>
<span class="t" style="left:1853.0px;top:473.3px;font-size:11.5px;color:#7c7c7c;transform:scaleX(1.044);">mm</span>
<div class="a" style="left:1592px;top:491px;width:288px;height:1px;background:#3a3a3a"></div>
<div class="a" style="left:1592px;top:492px;width:288px;height:1px;background:#505050"></div>
<div class="a" style="left:1685.5px;top:503.5px;width:100px;height:17px;border-radius:8.5px;background:linear-gradient(#636363,#535353 50%,#474747);border:1px solid #242424;box-shadow:0 1px 0 rgba(255,255,255,.10),inset 0 1px 0 rgba(255,255,255,.16)"></div>
<span class="t" style="left:1706.3px;top:506.5px;font-size:11.5px;color:#aaaaaa;transform:scaleX(0.996);">Ruota cella</span>
<div class="a" style="left:1596px;top:529px;width:11px;height:10px;background:#161616;border:1px solid #5a5a5a"></div>
<svg class="a" style="left:1596px;top:524px" width="14" height="16"><path d="M2.500 9L5.500 12.500L11 2" stroke="#f4f4f4" stroke-width="1.800" fill="none"/></svg>
<span class="t" style="left:1615.5px;top:528.3px;font-size:12px;color:#e8e8e8;transform:scaleX(0.999);">Blocca su proporzioni foto</span>
<span class="t" style="left:1819.5px;top:559.1px;font-size:14px;color:#a8a8a8;transform:scaleX(0.929);">Pagina</span>
<svg class="a" style="left:1871px;top:561px" width="12" height="12"><path d="M10 1v9.500L1.500 5.750z" fill="#a0a0a0"/></svg>
<div class="a" style="left:1585px;top:580px;width:301px;height:2px;background:#0c0c0c"></div><div class="a" style="left:1585px;top:582px;width:301px;height:1px;background:#383838"></div>
<span class="t" style="left:1744.5px;top:591.1px;font-size:14px;color:#a8a8a8;transform:scaleX(0.939);">Processo di stampa</span>
<svg class="a" style="left:1871px;top:593px" width="12" height="12"><path d="M10 1v9.500L1.500 5.750z" fill="#a0a0a0"/></svg>
<div class="a" style="left:1585px;top:612px;width:301px;height:2px;background:#0c0c0c"></div><div class="a" style="left:1585px;top:614px;width:301px;height:1px;background:#383838"></div>
<div class="a" style="left:1585px;top:873px;width:302px;height:2px;background:#141414"></div>
<div class="a" style="left:1586.5px;top:883.5px;width:147px;height:26px;background:linear-gradient(#404040,#343434 50%,#2c2c2c);border:1px solid #161616;box-shadow:inset 0 1px 0 #4c4c4c"></div>
<span class="t" style="left:1637.5px;top:888.1px;font-size:14px;color:#1c1c1c;transform:scaleX(0.902);text-shadow:0 1px 0 rgba(255,255,255,.10);">Stampa</span>
<div class="a" style="left:1739.5px;top:883.5px;width:146.5px;height:26px;background:linear-gradient(#6c6c6c,#585858 45%,#474747);border:1px solid #1a1a1a;box-shadow:inset 0 1px 0 #808080"></div>
<span class="t" style="left:1766.0px;top:888.1px;font-size:14px;color:#bababa;transform:scaleX(0.917);">Stampa su file...</span>
<!-- FILM -->
<div class="a" style="left:15px;top:927px;width:27px;height:17px;border:1px solid #c8c8c8;background:#0c0c0c"></div>
<div class="a" style="left:16px;top:928px;width:25px;height:2px;background:#b0b0b0"></div>
<div class="a" style="left:35px;top:928.5px;width:5px;height:1.5px;background:repeating-linear-gradient(90deg,#111 0 1px,#b0b0b0 1px 2px)"></div>
<span class="t" style="left:24.6px;top:929.3px;font-size:14px;color:#d6d6d6;font-weight:700;transform:scaleX(0.771);">1</span>
<div class="a" style="left:52px;top:927px;width:27px;height:17px;border:1px solid #6c6c6c;background:#0a0a0a"></div>
<div class="a" style="left:53px;top:928px;width:25px;height:2px;background:#6a6a6a"></div>
<span class="t" style="left:62.0px;top:929.3px;font-size:14px;color:#8a8a8a;font-weight:700;transform:scaleX(0.899);">2</span>
<div class="a" style="left:89.5px;top:927px;width:1px;height:17px;background:repeating-linear-gradient(#3c3c3c 0 1px,#000 1px 3px)"></div>
<div class="a" style="left:175px;top:927px;width:1px;height:17px;background:repeating-linear-gradient(#3c3c3c 0 1px,#000 1px 3px)"></div>
<div class="a" style="left:100px;top:928px;width:6px;height:6px;background:#6c6c6c"></div>
<div class="a" style="left:100px;top:937px;width:6px;height:6px;background:#6c6c6c"></div>
<div class="a" style="left:109px;top:928px;width:6px;height:6px;background:#6c6c6c"></div>
<div class="a" style="left:109px;top:937px;width:6px;height:6px;background:#6c6c6c"></div>
<svg class="a" style="left:124px;top:926px" width="42" height="19" viewBox="124 926 42 19"><path d="M126 935.500l7.500-7.500v4.200h6.500v6.600h-6.500V943z" fill="#5e5e5e"/><path d="M164 935.500l-7.500-7.500v4.200H150v6.600h6.500V943z" fill="#5e5e5e"/></svg>
<span class="t" style="left:186.0px;top:930.0px;font-size:13px;color:#b0b0b0;transform:scaleX(0.956);">raccolta : Raccolta per fotolibro-slideshow</span>
<span class="t" style="left:440.0px;top:930.0px;font-size:13px;color:#b0b0b0;transform:scaleX(0.979);">5 foto /1 selezionata /Danza_04.jpg</span>
<svg class="a" style="left:646px;top:932px" width="10" height="7"><path d="M.8 1h8L4.800 5.800z" fill="#c0c0c0"/></svg>
<span class="t" style="left:1712.5px;top:928.9px;font-size:12.5px;color:#9a9a9a;transform:scaleX(0.976);">Filtro:</span>
<div class="a" style="left:1757px;top:928px;width:127px;height:16px;background:#161616;border:1px solid #5a5a5a"></div>
<span class="t" style="left:1763.0px;top:929.6px;font-size:12.5px;color:#f2f2f2;transform:scaleX(0.979);">Nessun filtro</span>
<div class="a" style="left:1870.5px;top:929px;width:12.5px;height:14px;background:linear-gradient(#6a6a6a,#4a4a4a)"></div>
<svg class="a" style="left:1872px;top:930px" width="10" height="12"><path d="M2 5L5 1.800L8 5zM2 7L5 10.200L8 7z" fill="#d8d8d8"/></svg>
<div class="a" style="left:1894px;top:927.5px;width:10.5px;height:15px;background:linear-gradient(#8e8e8e 0 50%,#3a3a3a 50%);border:1px solid #6a6a6a"></div>
<div class="a" style="left:15px;top:951px;width:1890px;height:148px;border:1px solid #363636;background:#000"></div>
<div class="a" style="left:18px;top:954px;width:1884px;height:131px;background:#232323"></div>
<div class="a" style="left:18px;top:954px;width:131px;height:131px;background:linear-gradient(90deg,#1e1e1e,#2b2b2b 12%,#2e2e2e 85%,#262626)"></div>
<div class="a" style="left:149px;top:954px;width:131px;height:131px;background:linear-gradient(#7e7e7e,#6e6e6e 30%,#666);border-left:1px solid #8a8a8a;border-right:1px solid #4e4e4e"></div>
<div class="a" style="left:280px;top:954px;width:131px;height:131px;background:linear-gradient(#7e7e7e,#6e6e6e 30%,#666);border-left:1px solid #8a8a8a;border-right:1px solid #4e4e4e"></div>
<div class="a" style="left:411px;top:954px;width:131px;height:131px;background:#c7c7c7;border:1px solid #d6d6d6"></div>
<div class="a" style="left:542px;top:954px;width:131px;height:131px;background:linear-gradient(90deg,#262626,#2d2d2d 12%,#2e2e2e 85%,#262626)"></div>
<svg class="a" style="left:45px;top:961px" width="76" height="113" viewBox="45 961 76 113"><rect x="45.500" y="961.500" width="75" height="112" fill="#2e3136" stroke="#1c1c1e" stroke-width="1"/><g filter="url(#cb1)"><path d="M62 986L70 984L84 990L95 992L90 1004L80 1008L68 1004z" fill="#3b2b29"/><path d="M66 990L74 1002L88 1006" stroke="#5e4a46" stroke-width="2" fill="none"/><path d="M84 1000L96 1002L94 1022L90 1040L84 1049L76 1040L72 1030L62 1036L59 1024L66 1012z" fill="#7a1216"/><path d="M93 1030L106 1047" stroke="#6a5856" stroke-width="2.500"/></g></svg>
<svg class="a" style="left:162px;top:965px" width="106" height="106" viewBox="162 965 106 106"><rect x="162.500" y="965.500" width="105" height="105" fill="#030303" stroke="#f4f4f4" stroke-width="1"/><g filter="url(#cb1)" stroke-linecap="round" fill="none"><path d="M205 990C208 984 214 984 218 988C222 986 226 990 222 994C218 992 212 992 208 996z" fill="#8e4c2c" stroke="none" opacity=".85"/><circle cx="213" cy="997" r="3.800" fill="#b47656" stroke="none"/><path d="M213 1002L216 1022" stroke="#c48e6c" stroke-width="6.500"/><path d="M212 1008L203 1012L200 1010" stroke="#cc9878" stroke-width="2.800"/><path d="M216 1024L196 1028" stroke="#ba7e5a" stroke-width="5.500"/><path d="M196 1028L207 1040L211 1044" stroke="#b47856" stroke-width="3.600"/><path d="M218 1023L236 1030" stroke="#c8906c" stroke-width="5"/><path d="M236 1030L233 1021" stroke="#c08866" stroke-width="3.400"/></g></svg>
<svg class="a" style="left:293px;top:965px" width="106" height="106" viewBox="293 965 106 106"><defs><radialGradient id="t3g" cx=".45" cy=".62" r=".8"><stop offset="0" stop-color="#d6cab2"/><stop offset=".55" stop-color="#c4b9a4"/><stop offset=".85" stop-color="#8f8b88"/><stop offset="1" stop-color="#6c6e78"/></radialGradient></defs><rect x="293.500" y="965.500" width="105" height="105" fill="url(#t3g)" stroke="#f4f4f4" stroke-width="1"/><g filter="url(#cb1)" stroke-linecap="round" fill="none"><path d="M307 986L309 1000L314 1006" stroke="#c69c7a" stroke-width="4"/><path d="M313 1000L332 994" stroke="#caa07e" stroke-width="3"/><circle cx="330" cy="984" r="4.500" fill="#c8946a" stroke="none"/><path d="M322 990L336 988L343 996L340 1010L338 1030L336 1046L328 1050L324 1040L322 1024L312 1026L311 1006z" fill="#191b2b" stroke="none"/><path d="M312 1018L320 1030L314 1034z" fill="#9a9690" stroke="none" opacity=".8"/><path d="M331 1046L333 1066" stroke="#a88062" stroke-width="3"/></g></svg>
<svg class="a" style="left:421px;top:961px" width="111" height="112" viewBox="421 961 111 112"><rect x="421" y="961" width="111" height="112" fill="#e3e3e3"/><rect x="425" y="966" width="103" height="103" fill="url(#cbg)"/><rect x="425" y="966" width="103" height="103" fill="url(#cvg)"/><g filter="url(#cb1)"><g transform="translate(60.1 915.5) scale(0.3312)"><defs><linearGradient id="skn" x1="0" y1="0" x2="1" y2="0"><stop offset="0" stop-color="#9c6644"/><stop offset=".5" stop-color="#bb8660"/><stop offset="1" stop-color="#9a6442"/></linearGradient></defs><path d="M1222 336L1232 365L1222.700 384L1215 407.600L1207 431L1205.500 446.700L1211 453L1198 453.500L1197.600 451L1191.300 429.500L1199.200 415.400L1204 387L1213.300 368.400L1218 345z" fill="#a26c49"/><path d="M1223 286L1238 300L1246 316L1249 342L1252.500 365L1252.500 387L1260 412L1268 433L1273 453L1278 460L1262 459L1260 455L1258.700 434L1248 412L1238.400 390L1233.700 364L1222.700 331L1215 300z" fill="url(#skn)"/><path d="M1213 224L1219 226L1218 243L1208 267L1207 280L1214 300L1212 308L1207 304L1199 281L1197 267L1204 240z" fill="#b07a54"/><path d="M1261 223L1268 224L1275 240L1284 266L1275 288L1262 306L1254 312L1252 308L1262 292L1272 266L1263 242z" fill="#b98460"/><path d="M1234 204L1246 204L1248 220L1256 222L1240 232L1224 222L1232 220z" fill="#c99878"/><path d="M1218 223L1226 219.500C1234 228 1248 228 1255 219L1261 223L1262 246L1258.500 271L1258.500 294L1255 308L1246 316L1238 300L1223 286L1229.700 271L1220 246z" fill="#18161a"/><path d="M1220 226L1226 221C1234 229 1248 229 1255 221L1260 226L1261 242C1248 238 1232 238 1221 244z" fill="#4a332c" opacity=".75"/><ellipse cx="1244.500" cy="195" rx="9.500" ry="14" fill="#d8a888"/><path d="M1232 202C1226 190 1229 176 1240 173.500C1250 171.500 1257 177 1254 184C1248 181 1241 184 1239 196z" fill="#dcc0a0"/><circle cx="1221.500" cy="186" r="6.200" fill="#d6b898"/></g></g></svg>
<svg class="a" style="left:569px;top:961px" width="76" height="113" viewBox="569 961 76 113"><defs><clipPath id="t5c"><rect x="569" y="961" width="76" height="113"/></clipPath></defs><g clip-path="url(#t5c)"><g transform="translate(454.826 935.725) scale(0.174312)"><rect x="655" y="145" width="436" height="651" fill="url(#abg)"/><rect x="655" y="560" width="436" height="236" fill="url(#afl)"/><g filter="url(#ab8)"><path d="M757 120H888L886 330L882 420L878 480L870 560L860 612L754 612L754 470L756 300z" fill="url(#alb)"/></g><g filter="url(#ab3)"><path d="M776 120H890L889 330L886 420L882 480L876 540L776 540z" fill="#e7e7e6"/></g><ellipse cx="800" cy="618" rx="62" ry="34" fill="#a4988e" opacity=".55" filter="url(#ab8)"/><g filter="url(#ab1)" fill="#6c5f53"><path d="M829 247L848 243L857 262L864 290L870 322L881 360L890 384L894 445L893 500L882 552L862 592L840 591L829 575L833 545L827 505L820 474L800 460L781 445L793 384L803 330L806 304L812 282L815 262z"/><path d="M808 302L792 282L781 262L794 246L815 231L833 222L850 228" fill="none" stroke="#6c5f53" stroke-width="10" stroke-linecap="round" stroke-linejoin="round"/><path d="M848 246L862 286" fill="none" stroke="#6c5f53" stroke-width="7" stroke-linecap="round"/><ellipse cx="833" cy="259" rx="16" ry="15"/></g><g filter="url(#ab3)"><path d="M781 447L800 461L820 475L826 505L818 545L804 578L790 594L766 596L768 540L774 490z" fill="#b1a79d" opacity=".8"/><path d="M800 480L812 478L806 530L792 580L784 584L794 530z" fill="#ebe9e6" opacity=".85"/><path d="M846 258L857 292L853 294L843 262z" fill="#d6d2cc" opacity=".8"/></g><g filter="url(#ab1)" stroke-linecap="round" fill="none"><path d="M903 312L880 262" stroke="#e3c2ac" stroke-width="11"/><path d="M892 228L968 219" stroke="#e6c6b0" stroke-width="12"/><path d="M969 221L983 292" stroke="#dcb8a0" stroke-width="12"/><path d="M892 226L925 201" stroke="#e6c7b2" stroke-width="9"/><ellipse cx="943" cy="199" rx="22" ry="9" fill="#e4c0a8" stroke="none" transform="rotate(-8 943 199)"/><ellipse cx="884" cy="242" rx="12" ry="15" fill="#d9a890" stroke="none"/></g><g filter="url(#ab1)"><path d="M939 229C925 231 917 246 914 268L909 312L900 352L890 420L884 470L869 531L854 592L839 640L820 677L802 701L781 707L711 714L655 720V796H720L750 774L793 756L839 738L863 714L881 683L900 640L918 601L912 577L918 549L927 510L932 470L941 470L944 561L954 640L973 689L1000 738L1031 744L1061 762L1091 780V689L1064 668L1043 616L1028 546L1018 470L1008 400L1003 350L992 312L975 274C968 244 955 229 939 229z" fill="url(#avl)"/><path d="M927 258C922 276 922 298 930 310H958C964 296 962 272 956 258C948 246 935 246 927 258z" fill="#3e302b"/><path d="M900 352L884 470L869 531L880 531L895 470L908 380z" fill="#2a2622" opacity=".7"/><path d="M1003 350L1018 470L1028 546L1018 546L1006 470L996 380z" fill="#26221f" opacity=".7"/><path d="M655 720L711 714L781 707L802 701L790 720L720 735L655 745z" fill="#1e1b19" opacity=".8"/><path d="M839 738L863 714L881 683L900 640L890 640L870 690L840 725z" fill="#2c2723" opacity=".8"/><path d="M954 640L973 689L1000 738L1031 744L1010 720L985 690L966 640z" fill="#2a2521" opacity=".8"/></g><g filter="url(#ab1)"><path d="M932 470L941 470L943 561L950 640L958 680L946 682L938 640L934 660L920 660L922 610L924 577L926 549L929 510z" fill="#c4a392"/><path d="M934 480L938 600L946 676" stroke="#2a201c" stroke-width="2.500" fill="none" opacity=".8"/><path d="M911 641L934 640L935 672L930 698L921 698L915 672z" fill="#b8976a"/><path d="M945 682L966 680L967 706L962 715L950 715z" fill="#bb9a6e"/></g></g><rect x="569" y="961" width="76" height="113" fill="#16110e" opacity=".72"/></g><rect x="569.500" y="961.500" width="75" height="112" fill="none" stroke="#1a1614" stroke-width="1"/></svg>
<svg class="a" style="left:89.5px;top:1058.5px" width="15" height="15"><rect x="0" y="0" width="15" height="15" fill="#1c1c1c"/><rect x=".5" y="1.500" width="14" height="13" fill="none" stroke="#3a3a3a" stroke-width=".8"/><path d="M1.600 8.500L7.900 2.400H13.600V8L7.300 14.200z" fill="#1c1c1c" stroke="#4c4c4c" stroke-width="1.150"/><rect x="11" y="3.800" width="1.300" height="1.300" fill="#4c4c4c"/><path d="M5.100 8.500L8.700 5.400M7.300 10.700L10.600 7.700" stroke="#4c4c4c" stroke-width="1" stroke-dasharray="1 .6"/></svg>
<svg class="a" style="left:105.5px;top:1058.5px" width="15" height="15"><rect x="0" y="0" width="15" height="15" fill="#1c1c1c"/><rect x=".5" y="1.500" width="14" height="13" fill="none" stroke="#3a3a3a" stroke-width=".8"/><rect x="4.100" y="4.200" width="7" height="4.300" fill="#4c4c4c" opacity=".85"/><rect x="7.050" y="8.500" width="1.100" height="3.800" fill="#4c4c4c"/></svg>
<svg class="a" style="left:252px;top:1055px" width="15" height="15"><rect x="0" y="0" width="15" height="15" fill="#050505"/><rect x=".5" y="1.500" width="14" height="13" fill="none" stroke="#9c9c9c" stroke-width=".8"/><path d="M1.600 8.500L7.900 2.400H13.600V8L7.300 14.200z" fill="#050505" stroke="#ececec" stroke-width="1.150"/><rect x="11" y="3.800" width="1.300" height="1.300" fill="#ececec"/><path d="M5.100 8.500L8.700 5.400M7.300 10.700L10.600 7.700" stroke="#ececec" stroke-width="1" stroke-dasharray="1 .6"/></svg>
<svg class="a" style="left:367px;top:1054px" width="15" height="15"><rect x="0" y="0" width="15" height="15" fill="#050505"/><rect x=".5" y="1.500" width="14" height="13" fill="none" stroke="#9c9c9c" stroke-width=".8"/><path d="M1.600 8.500L7.900 2.400H13.600V8L7.300 14.200z" fill="#050505" stroke="#ececec" stroke-width="1.150"/><rect x="11" y="3.800" width="1.300" height="1.300" fill="#ececec"/><path d="M5.100 8.500L8.700 5.400M7.300 10.700L10.600 7.700" stroke="#ececec" stroke-width="1" stroke-dasharray="1 .6"/></svg>
<svg class="a" style="left:382px;top:1054px" width="15" height="15"><rect x="0" y="0" width="15" height="15" fill="#050505"/><rect x=".5" y="1.500" width="14" height="13" fill="none" stroke="#9c9c9c" stroke-width=".8"/><rect x="4.100" y="4.200" width="7" height="4.300" fill="#ececec" opacity=".85"/><rect x="7.050" y="8.500" width="1.100" height="3.800" fill="#ececec"/></svg>
<svg class="a" style="left:483px;top:1054px" width="15" height="15"><rect x="0" y="0" width="15" height="15" fill="#050505"/><rect x=".5" y="1.500" width="14" height="13" fill="none" stroke="#9c9c9c" stroke-width=".8"/><path d="M1.600 8.500L7.900 2.400H13.600V8L7.300 14.200z" fill="#050505" stroke="#ececec" stroke-width="1.150"/><rect x="11" y="3.800" width="1.300" height="1.300" fill="#ececec"/><path d="M5.100 8.500L8.700 5.400M7.300 10.700L10.600 7.700" stroke="#ececec" stroke-width="1" stroke-dasharray="1 .6"/></svg>
<svg class="a" style="left:498px;top:1054px" width="15" height="15"><rect x="0" y="0" width="15" height="15" fill="#050505"/><rect x=".5" y="1.500" width="14" height="13" fill="none" stroke="#9c9c9c" stroke-width=".8"/><rect x="4.100" y="4.200" width="7" height="4.300" fill="#ececec" opacity=".85"/><rect x="7.050" y="8.500" width="1.100" height="3.800" fill="#ececec"/></svg>
<svg class="a" style="left:513px;top:1054px" width="15" height="15"><rect x="0" y="0" width="15" height="15" fill="#050505"/><rect x=".5" y="1.500" width="14" height="13" fill="none" stroke="#9c9c9c" stroke-width=".8"/><rect x="2.900" y="5.400" width="6.400" height="4.300" fill="none" stroke="#ececec" stroke-width="1"/><rect x="5" y="7.300" width="6.400" height="4.500" fill="#050505" stroke="#ececec" stroke-width="1"/></svg>
<svg class="a" style="left:599.5px;top:1058px" width="15" height="15"><rect x="0" y="0" width="15" height="15" fill="#1c1c1c"/><rect x=".5" y="1.500" width="14" height="13" fill="none" stroke="#3a3a3a" stroke-width=".8"/><path d="M1.600 8.500L7.900 2.400H13.600V8L7.300 14.200z" fill="#1c1c1c" stroke="#4c4c4c" stroke-width="1.150"/><rect x="11" y="3.800" width="1.300" height="1.300" fill="#4c4c4c"/><path d="M5.100 8.500L8.700 5.400M7.300 10.700L10.600 7.700" stroke="#4c4c4c" stroke-width="1" stroke-dasharray="1 .6"/></svg>
<svg class="a" style="left:614.5px;top:1058px" width="15" height="15"><rect x="0" y="0" width="15" height="15" fill="#1c1c1c"/><rect x=".5" y="1.500" width="14" height="13" fill="none" stroke="#3a3a3a" stroke-width=".8"/><rect x="4.100" y="4.200" width="7" height="4.300" fill="#4c4c4c" opacity=".85"/><rect x="7.050" y="8.500" width="1.100" height="3.800" fill="#4c4c4c"/></svg>
<svg class="a" style="left:629.5px;top:1058px" width="15" height="15"><rect x="0" y="0" width="15" height="15" fill="#1c1c1c"/><rect x=".5" y="1.500" width="14" height="13" fill="none" stroke="#3a3a3a" stroke-width=".8"/><rect x="2.900" y="5.400" width="6.400" height="4.300" fill="none" stroke="#4c4c4c" stroke-width="1"/><rect x="5" y="7.300" width="6.400" height="4.500" fill="#1c1c1c" stroke="#4c4c4c" stroke-width="1"/></svg>
<div class="a" style="left:105.5px;top:965.5px;width:11.5px;height:11.5px;border-radius:50%;border:1.500px solid #26282c;background:#30343a"></div>
<div class="a" style="left:252px;top:969.5px;width:10.5px;height:10.5px;border-radius:50%;background:#9c9c9c"></div>
<div class="a" style="left:382px;top:969px;width:11.5px;height:11.5px;border-radius:50%;border:1.500px solid #2c2c2c;background:#9a9a98"></div>
<div class="a" style="left:513px;top:969px;width:11.5px;height:11.5px;border-radius:50%;border:1.500px solid #2c2c2c;background:#a39da3"></div>
<div class="a" style="left:629px;top:965.5px;width:11.5px;height:11.5px;border-radius:50%;border:1.500px solid #2a2624;background:#3a3430"></div>
<svg class="a" style="left:154.5px;top:957px" width="12" height="18"><path d="M1 .5v15" stroke="#d8d8d8" stroke-width="1.400"/><rect x="1.500" y=".5" width="8.500" height="7.500" fill="#fff" stroke="#9a9a9a" stroke-width=".6"/></svg>
<svg class="a" style="left:285.5px;top:957px" width="12" height="18"><path d="M1 .5v15" stroke="#d8d8d8" stroke-width="1.400"/><rect x="1.500" y=".5" width="8.500" height="7.500" fill="#fff" stroke="#9a9a9a" stroke-width=".6"/></svg>
<svg class="a" style="left:415.5px;top:957px" width="12" height="18"><path d="M1 .5v15" stroke="#d8d8d8" stroke-width="1.400"/><rect x="1.500" y=".5" width="8.500" height="7.500" fill="#fff" stroke="#9a9a9a" stroke-width=".6"/></svg>
<svg class="a" style="left:160px;top:1072px" width="40" height="10" viewBox="160 1072 40 10"><path transform="translate(165.3 1077)" d="M0 -3.400L.95 -1.100L3.400 -1.050L1.500 .55L2.100 3L0 1.600L-2.100 3L-1.500 .55L-3.400 -1.050L-.95 -1.100z" fill="#e6e6e6"/><path transform="translate(171.9 1077)" d="M0 -3.400L.95 -1.100L3.400 -1.050L1.500 .55L2.100 3L0 1.600L-2.100 3L-1.500 .55L-3.400 -1.050L-.95 -1.100z" fill="#e6e6e6"/><path transform="translate(178.5 1077)" d="M0 -3.400L.95 -1.100L3.400 -1.050L1.500 .55L2.100 3L0 1.600L-2.100 3L-1.500 .55L-3.400 -1.050L-.95 -1.100z" fill="#e6e6e6"/><path transform="translate(185.1 1077)" d="M0 -3.400L.95 -1.100L3.400 -1.050L1.500 .55L2.100 3L0 1.600L-2.100 3L-1.500 .55L-3.400 -1.050L-.95 -1.100z" fill="#e6e6e6"/><path transform="translate(191.7 1077)" d="M0 -3.400L.95 -1.100L3.400 -1.050L1.500 .55L2.100 3L0 1.600L-2.100 3L-1.500 .55L-3.400 -1.050L-.95 -1.100z" fill="#e6e6e6"/></svg>
<svg class="a" style="left:568px;top:1076px" width="30" height="10" viewBox="568 1076 30 10"><path transform="translate(573 1081) scale(.85)" d="M0 -3.400L.95 -1.100L3.400 -1.050L1.500 .55L2.100 3L0 1.600L-2.100 3L-1.500 .55L-3.400 -1.050L-.95 -1.100z" fill="#444"/><path transform="translate(579 1081) scale(.85)" d="M0 -3.400L.95 -1.100L3.400 -1.050L1.500 .55L2.100 3L0 1.600L-2.100 3L-1.500 .55L-3.400 -1.050L-.95 -1.100z" fill="#444"/><path transform="translate(585 1081) scale(.85)" d="M0 -3.400L.95 -1.100L3.400 -1.050L1.500 .55L2.100 3L0 1.600L-2.100 3L-1.500 .55L-3.400 -1.050L-.95 -1.100z" fill="#444"/></svg>
</body></html>
